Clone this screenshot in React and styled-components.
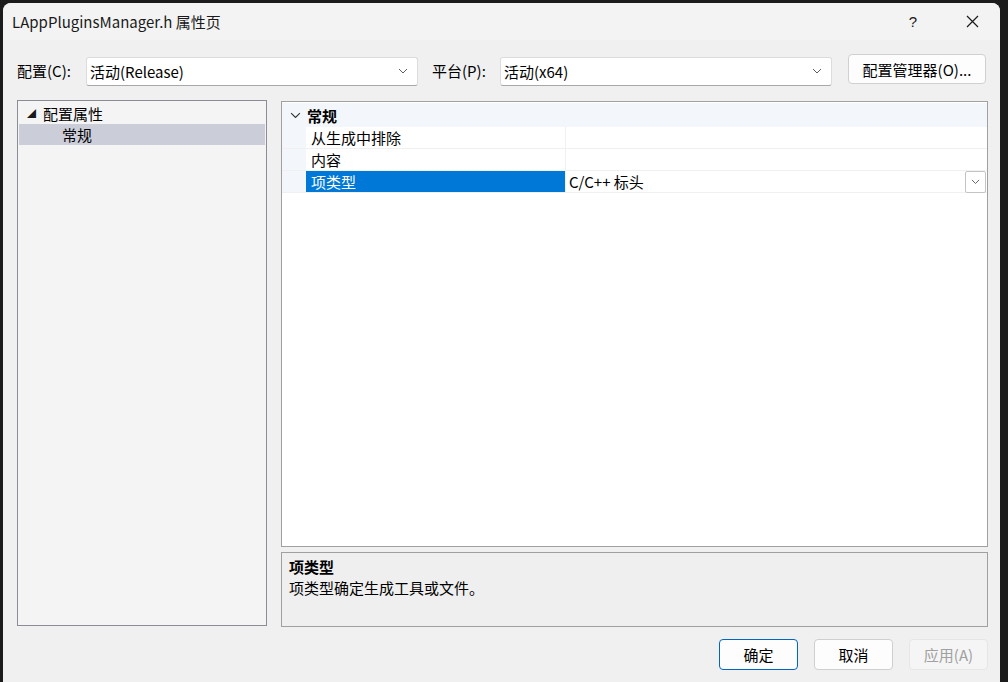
import styled, { createGlobalStyle } from "styled-components";

const GlobalStyle = createGlobalStyle`
  html, body {
    margin: 0;
    padding: 0;
    background: #1c1c1c;
    overflow: hidden;
  }
  * {
    box-sizing: border-box;
  }
`;

const font = `"Noto Sans CJK SC", "Noto Sans", sans-serif`;

const Chevron = ({ size = 10, color = "#5c5c5c" }) => (
    <svg width={size} height={size * 0.6} viewBox="0 0 10 6">
        <polyline points="1,1 5,5 9,1" fill="none" stroke={color} strokeWidth="1" />
    </svg>
);

const App = () => {
    const rows = [
        { name: "从生成中排除", value: "" },
        { name: "内容", value: "" },
        { name: "项类型", value: "C/C++ 标头", selected: true },
    ];

    return (
        <Screen>
            <GlobalStyle />
            <Window>
                <TitleBar>
                    <Title>LAppPluginsManager.h 属性页</Title>
                    <TitleButtons>
                        <Help>?</Help>
                        <Close>
                            <svg width="13" height="13" viewBox="0 0 13 13">
                                <path d="M1 1 L12 12 M12 1 L1 12" stroke="#1a1a1a" strokeWidth="1.2" />
                            </svg>
                        </Close>
                    </TitleButtons>
                </TitleBar>

                <Body>
                    <ConfigRow>
                        <Label>配置(C):</Label>
                        <Select>
                            <span>活动(Release)</span>
                            <Chevron />
                        </Select>
                        <Label $wide>平台(P):</Label>
                        <Select>
                            <span>活动(x64)</span>
                            <Chevron />
                        </Select>
                        <ManagerBtn>配置管理器(O)...</ManagerBtn>
                    </ConfigRow>

                    <Main>
                        <TreePanel>
                            <TreeItem>
                                <Expander>◢</Expander>
                                配置属性
                            </TreeItem>
                            <TreeItem $selected $indent>常规</TreeItem>
                        </TreePanel>

                        <RightColumn>
                            <Grid>
                                <Category>
                                    <CategoryIcon>
                                        <Chevron size={11} color="#333" />
                                    </CategoryIcon>
                                    常规
                                </Category>
                                {rows.map((r) => (
                                    <PropRow key={r.name}>
                                        <Gutter />
                                        <NameCell $selected={r.selected}>{r.name}</NameCell>
                                        <ValueCell>
                                            {r.value}
                                            {r.selected && (
                                                <DropBtn>
                                                    <Chevron size={9} color="#555" />
                                                </DropBtn>
                                            )}
                                        </ValueCell>
                                    </PropRow>
                                ))}
                            </Grid>
                            <Description>
                                <DescTitle>项类型</DescTitle>
                                <DescText>项类型确定生成工具或文件。</DescText>
                            </Description>
                        </RightColumn>
                    </Main>

                    <Footer>
                        <Button $primary>确定</Button>
                        <Button>取消</Button>
                        <Button $disabled>应用(A)</Button>
                    </Footer>
                </Body>
            </Window>
        </Screen>
    );
};

export default App;

const Screen = styled.div`
    width: 1008px;
    height: 682px;
    padding: 3px 8px 0 3px;
    background: #1c1c1c;
`;

const Window = styled.div`
    height: 100%;
    display: flex;
    flex-direction: column;
    background: #f0f0f0;
    border-radius: 8px 8px 0 0;
    overflow: hidden;
    font-family: ${font};
    font-size: 15px;
    color: #000;
`;

const TitleBar = styled.div`
    height: 37px;
    flex: none;
    display: flex;
    align-items: center;
    justify-content: space-between;
    padding-left: 9px;
    background: #f3f3f3;
`;

const Title = styled.div`
    font-size: 15px;
    color: #1a1a1a;
    margin-top: -1px;
`;

const TitleButtons = styled.div`
    display: flex;
    align-items: center;
    height: 100%;
`;

const Help = styled.div`
    width: 46px;
    text-align: center;
    font-family: "Liberation Sans", sans-serif;
    font-size: 15px;
    color: #1a1a1a;
    margin-right: 13px;
`;

const Close = styled.div`
    width: 46px;
    height: 100%;
    display: flex;
    align-items: center;
    justify-content: center;
    margin-right: 5px;
`;

const Body = styled.div`
    flex: 1;
    display: flex;
    flex-direction: column;
    padding: 0 12px 0 14px;
`;

const ConfigRow = styled.div`
    height: 32px;
    margin-top: 14px;
    display: flex;
    align-items: center;
`;

const Label = styled.div`
    width: ${(p) => (p.$wide ? "68px" : "69px")};
    margin-left: ${(p) => (p.$wide ? "14px" : "0")};
    white-space: nowrap;
`;

const Select = styled.div`
    width: 332px;
    height: 29px;
    margin-top: 2px;
    display: flex;
    align-items: center;
    justify-content: space-between;
    padding: 0 9px 0 3px;
    background: #fff;
    border: 1px solid #dcdcdc;
    border-bottom-color: #a8a8a8;
    border-radius: 3px;
`;

const ManagerBtn = styled.div`
    margin-left: 16px;
    width: 138px;
    height: 30px;
    margin-top: -2px;
    display: flex;
    align-items: center;
    justify-content: center;
    background: #fdfdfd;
    border: 1px solid #d0d0d0;
    border-radius: 4px;
`;

const Main = styled.div`
    height: 527px;
    margin-top: 14px;
    display: flex;
    gap: 14px;
`;

const TreePanel = styled.div`
    width: 250px;
    height: 526px;
    padding: 2px 1px;
    background: #f4f4f4;
    border: 1px solid #8c8c96;
`;

const TreeItem = styled.div`
    height: 21px;
    display: flex;
    align-items: center;
    padding-left: ${(p) => (p.$indent ? "43px" : "8px")};
    background: ${(p) => (p.$selected ? "#cbcdd9" : "transparent")};
`;

const Expander = styled.span`
    width: 16px;
    font-size: 9px;
    color: #1a1a1a;
`;

const RightColumn = styled.div`
    flex: 1;
    display: flex;
    flex-direction: column;
    gap: 5px;
    padding-top: 1px;
`;

const Grid = styled.div`
    flex: 1;
    background: #fff;
    border: 1px solid #a0a0a0;
    padding-top: 1px;
`;

const Category = styled.div`
    height: 24px;
    display: flex;
    align-items: center;
    background: #f3f6fa;
    font-weight: 700;
`;

const CategoryIcon = styled.span`
    width: 25px;
    display: flex;
    justify-content: center;
    padding-left: 1px;
`;

const PropRow = styled.div`
    height: 22px;
    display: flex;
    border-bottom: 1px solid #f0f0f0;
`;

const Gutter = styled.div`
    width: 24px;
    background: #f3f6fa;
`;

const NameCell = styled.div`
    width: 260px;
    padding-left: 5px;
    display: flex;
    align-items: center;
    background: ${(p) => (p.$selected ? "#0078d7" : "#fff")};
    color: ${(p) => (p.$selected ? "#fff" : "#000")};
    border-right: 1px solid #f0f0f0;
`;

const ValueCell = styled.div`
    flex: 1;
    position: relative;
    display: flex;
    align-items: center;
    padding-left: 3px;
`;

const DropBtn = styled.div`
    position: absolute;
    right: 1px;
    top: 0;
    width: 21px;
    height: 22px;
    display: flex;
    align-items: center;
    justify-content: center;
    background: #fff;
    border: 1px solid #c4c4c4;
    border-radius: 2px;
`;

const Description = styled.div`
    height: 75px;
    flex: none;
    padding: 3px 7px;
    background: #efefef;
    border: 1px solid #a0a0a0;
`;

const DescTitle = styled.div`
    font-weight: 700;
    line-height: 21px;
`;

const DescText = styled.div`
    line-height: 22px;
`;

const Footer = styled.div`
    margin-top: 12px;
    display: flex;
    justify-content: flex-end;
    gap: 16px;
`;

const Button = styled.div`
    width: 79px;
    height: 31px;
    display: flex;
    align-items: center;
    justify-content: center;
    border-radius: 4px;
    background: ${(p) => (p.$disabled ? "#f5f5f5" : "#fdfdfd")};
    border: 1px solid ${(p) => (p.$primary ? "#0067c0" : p.$disabled ? "#e6e6e6" : "#cfcfcf")};
    color: ${(p) => (p.$disabled ? "#a0a0a0" : "#000")};
`;
